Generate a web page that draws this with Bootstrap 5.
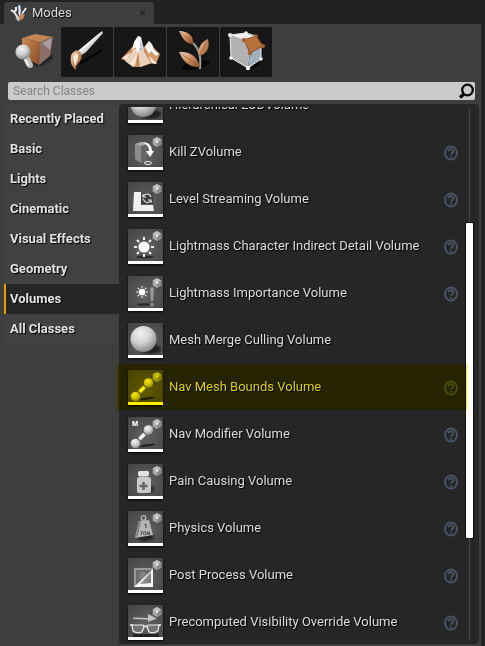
<!DOCTYPE html>
<html lang="en">
<head>
<meta charset="utf-8">
<meta name="viewport" content="width=device-width, initial-scale=1">
<title>Modes</title>
<link href="https://cdn.jsdelivr.net/npm/bootstrap@5.3.0/dist/css/bootstrap.min.css" rel="stylesheet">
<style>
body { background: #222; color: #dcdcdc; font: 13px/18px Roboto, sans-serif; text-shadow: 1px 1px 1px #000; }
svg { display: block; flex: none; }
.editor { padding: 2px 4px 0 0; }
.mode-tab { width: 150px; height: 22px; margin-left: 4px; padding: 0 8px 0 5px; background: #3e3e3e; border-radius: 3px 3px 0 0; }
.tab-close { color: #242424; font-size: 13px; line-height: 18px; text-shadow: none; background: none; }
.panel { background: #3e3e3e; padding: 3px 2px 2px 4px; }
.toolbar { gap: 1px; margin-left: 4px; }
.tool { width: 52px; height: 50px; background: #171717; border-radius: 2px; }
.tool.active { background: #3e3e3e; }
.search { height: 18px; margin: 5px 4px 4px; background: #cbcbcb; border-radius: 2px; }
.search input { font-size: 12px; line-height: 18px; height: 18px; color: #333; padding: 0 5px; }
.search input::placeholder { color: #858585; opacity: 1; }
.categories { width: 115px; }
.categories .nav-link { height: 30px; padding: 6px 0 0 6px; color: #e2e2e2; font-weight: 700; line-height: 18px; background: #414141; border-radius: 0; }
.categories .nav-link.active { background: #262626; border-left: 2px solid #e6a000; padding-left: 4px; }
.class-box { background: #262626; border-radius: 4px; padding: 3px 6px 3px 9px; }
.clip { overflow-x: visible; overflow-y: clip; }
.classes { margin-top: -25px; }
.class-row { height: 47px; padding-right: 8px; flex: none; }
.class-row > span { padding-bottom: 2px; }
.thumb { background: radial-gradient(circle at 50% 60%, #626262, #434343); border-bottom: 3px solid #fff; width: 35px; height: 35px; margin-right: 6px; box-shadow: 0 1px 2px #000; flex: none; }
.thumb text { text-shadow: none; }
.help { background: none; color: #4a5363; }
.picked::after { content: ""; position: absolute; inset: 0 -1px 1px -11px; background: #fff000; mix-blend-mode: multiply; pointer-events: none; z-index: 2; }
.scroll-col { width: 7px; padding: 2px 0 1px; }
.rail { width: 1px; background: #484848; }
.rail-above { flex: 114 0 0; }
.rail-below { flex: 102 0 0; }
.grip { flex: 315 0 0; background: #fff; border-radius: 1px; box-shadow: 0 0 0 1px #0d0d0d; }
</style>
<script src="https://cdn.jsdelivr.net/npm/bootstrap@5.3.0/dist/js/bootstrap.bundle.min.js"></script>
</head>
<body>
<svg width="0" height="0" class="position-absolute" aria-hidden="true">
  <defs>
    <radialGradient id="ball" cx=".4" cy=".3" r=".75"><stop offset="0" stop-color="#f4f4f4"/><stop offset=".5" stop-color="#cfcfcf"/><stop offset="1" stop-color="#7d7d7d"/></radialGradient>
    <linearGradient id="copper" x1="0" y1="0" x2="1" y2="1"><stop offset="0" stop-color="#c88a58"/><stop offset="1" stop-color="#8a4a20"/></linearGradient>
    <linearGradient id="leaf" x1="0" y1="0" x2="1" y2="1"><stop offset="0" stop-color="#f6d9c2"/><stop offset=".5" stop-color="#c88a5c"/><stop offset="1" stop-color="#8d5029"/></linearGradient>
    <linearGradient id="steel" x1="0" y1="0" x2="1" y2="1"><stop offset="0" stop-color="#b8b8b8"/><stop offset="1" stop-color="#6f6f6f"/></linearGradient>
    <filter id="soft" x="-30%" y="-50%" width="160%" height="200%"><feGaussianBlur stdDeviation="1"/></filter>
    <symbol id="cube" viewBox="0 0 10 10"><path d="M5 0 9.300 2.500V7.500L5 10 .7 7.500V2.500z" fill="#aaa"/><path d="M5 0 9.300 2.500 5 5 .7 2.500z" fill="#bdbdbd"/><path d="M5 5V10L9.300 7.500V2.500z" fill="#8b8b8b"/><circle cx="5" cy="4.500" r="1.500" fill="#e0e0e0"/></symbol>
    <symbol id="q" viewBox="0 0 14 16"><ellipse cx="7" cy="8" rx="6" ry="6.500" fill="none" stroke="currentColor" stroke-width="1.900"/><path d="M4.700 6.300C4.700 3.500 9.500 3.600 9.400 6.200 9.300 7.900 7.200 8 7.100 9.800M7.100 11V12.800" fill="none" stroke="currentColor" stroke-width="2"/></symbol>
    <symbol id="sun" viewBox="-10 -10 20 20"><circle r="5.600" fill="#fff"/><g stroke="#f4f4f4" stroke-width="2"><path d="M0-7V-10M0 7V10M-7 0H-10M7 0H10M-5-5-7-7M5-5 7-7M-5 5-7 7M5 5 7 7"/></g></symbol>
    <symbol id="links" viewBox="0 0 35 32"><ellipse cx="19" cy="28.500" rx="8" ry="1.300" fill="#222" transform="rotate(-8 19 28.500)"/><path d="M11.500 22 16.500 17" stroke="#fff" stroke-width="3.500"/><circle cx="7.500" cy="26.500" r="4.800" fill="url(#ball)"/><circle cx="20.500" cy="13" r="4.800" fill="url(#ball)"/></symbol>
    <symbol id="sphere" viewBox="0 0 35 32"><ellipse cx="22" cy="26" rx="11" ry="5" fill="#222" filter="url(#soft)"/><circle cx="15.500" cy="16" r="13" fill="url(#ball)"/></symbol>
  </defs>
</svg>

<div class="editor vh-100 d-flex flex-column overflow-hidden">
  <header class="mode-tab d-flex align-items-center flex-shrink-0">
    <svg width="19" height="18" viewBox="0 0 19 18" aria-hidden="true"><path d="M2 6 5 8 7 6V3M5 8 10 15" fill="none" stroke="#eee" stroke-width="2"/><path d="M9 2 11 1 12 8 10 9z" fill="#eef4ff" stroke="#86a4d2" stroke-width=".7"/><path d="M10 8 12 14" stroke="#d8e6f8" stroke-width="2"/><path d="M17 4 13 10" stroke="#f5f5f5" stroke-width="1.600"/><path d="M12 9 16 11 14 15 9 17z" fill="#c98752"/><path d="M7 13 10 17" stroke="#bcbcbc" stroke-width="2"/></svg>
    <span class="ms-1">Modes</span>
    <button type="button" class="tab-close border-0 p-0 ms-auto" aria-label="Close tab">×</button>
  </header>

  <main class="panel d-flex flex-column flex-fill overflow-hidden">
    <div class="toolbar d-flex flex-shrink-0" role="toolbar" aria-label="Modes">
      <button type="button" class="tool active border-0 p-0" aria-label="Place">
        <svg width="52" height="50" viewBox="0 0 52 50"><path d="M22 37 42 27 45 31 33 39z" fill="#1c1c1c" filter="url(#soft)"/><path d="M14 11 27 7 45 10 32 15z" fill="#c48552"/><path d="M14 11 32 15 31 38 14 29z" fill="url(#copper)"/><path d="M32 15 45 10 42 29 31 38z" fill="#8a6f68"/><path d="M34 16 44 11 42 23z" fill="#aa9aa2"/><path d="M18 30 22 38" stroke="#bbb" stroke-width="6" stroke-linecap="round"/><path d="M16 30 20 38" stroke="#e6e6e6" stroke-width="3" stroke-linecap="round"/><circle cx="15" cy="25" r="7.600" fill="url(#ball)"/></svg>
      </button>
      <button type="button" class="tool border-0 p-0" aria-label="Paint">
        <svg width="52" height="50" viewBox="0 0 52 50"><path d="M18 36 42 21 40 25 20 37z" fill="#050505"/><path d="M41 4 42 6 25 25 19 29 17 24z" fill="#d9d9d9"/><path d="M41 4 28 15 17 24 19 26z" fill="#fff"/><path d="M14 24C19 22 22 27 20 32 18 37 14 38 15 43 10 39 9 34 10 29 10 27 12 25 14 24z" fill="url(#leaf)"/><path d="M14 26C11 31 13 34 14 39 16 34 18 31 17 27z" fill="#fae7d6"/></svg>
      </button>
      <button type="button" class="tool border-0 p-0" aria-label="Landscape">
        <svg width="52" height="50" viewBox="0 0 52 50"><path d="M35 14 40 21 46 27 42 37 28 31 30 20z" fill="#d59a67"/><path d="M35 14 38 17 40 23 45 27 42 29 37 24 35 27 31 20z" fill="#f5f5f5"/><path d="M35 29 43 37 34 36z" fill="#fff0e6"/><path d="M24 9 19 19 7 32 12 34 19 40 27 40 38 36 33 26z" fill="#c88b5a"/><path d="M20 22 11 34 19 40 24 24 26 40 37 36 29 23z" fill="#ead1be"/><path d="M24 9 27 10 30 24 26 21 24 26 21 20 18 24 20 15z" fill="#fff"/><path d="M17 25 8 31 12 33zM24 25 21 39 16 37z" fill="#ffe4d4"/><path d="M26 11 30 25 26 21z" fill="#b5cbe0"/></svg>
      </button>
      <button type="button" class="tool border-0 p-0" aria-label="Foliage">
        <svg width="52" height="50" viewBox="0 0 52 50"><ellipse cx="29" cy="38" rx="14" ry="4" fill="#050505" transform="rotate(-12 29 38)"/><path d="M26 16C33 23 34 31 33 42" fill="none" stroke="#9ba1a5" stroke-width="2"/><path d="M12 4C21 4 27 9 26 17 18 17 15 10 12 4z" fill="url(#leaf)"/><path d="M41 12C43 21 40 27 32 29 30 22 34 15 41 12z" fill="url(#leaf)"/><path d="M12 25C23 24 30 29 33 40 22 41 16 34 12 25z" fill="url(#leaf)"/><path d="M13 5 26 16M40 14 33 28M13 26 32 39" stroke="#8a5434" stroke-width=".6"/></svg>
      </button>
      <button type="button" class="tool border-0 p-0" aria-label="Geometry editing">
        <svg width="52" height="50" viewBox="0 0 52 50"><path d="M28 40 41 31 45 33 33 42z" fill="#050505"/><path d="M10 8 26 6 36 10 25 14z" fill="#f0f0f0"/><path d="M10 8 25 13 30 26 28 41 11 31z" fill="#b2b2b2"/><path d="M30 25 41 19 41 32 28 41z" fill="#9fb0bd"/><path d="M10 8 11 31 28 41 41 32V20M10 8 26 6 36 9" fill="none" stroke="#eee" stroke-width="1"/><path d="M24 13 36 9 43 19 30 26z" fill="#b9713c" stroke="#8c4f25"/><g fill="#f5f5f5"><circle cx="10" cy="8" r="2"/><circle cx="26" cy="6" r="1.800"/><circle cx="11" cy="31" r="1.800"/><circle cx="28" cy="41" r="2.200"/><circle cx="41" cy="32" r="1.800"/></g><g fill="#a55f30"><circle cx="24" cy="13" r="2.200"/><circle cx="36" cy="9" r="1.800"/><circle cx="43" cy="19" r="2"/><circle cx="30" cy="26" r="2.300"/></g></svg>
      </button>
    </div>

    <div class="search d-flex align-items-center flex-shrink-0">
      <input type="text" class="flex-fill border-0 bg-transparent shadow-none" placeholder="Search Classes" aria-label="Search Classes">
      <svg width="17" height="18" viewBox="0 0 17 18" aria-hidden="true"><circle cx="9.500" cy="8" r="5.300" fill="none" stroke="#050505" stroke-width="2.300"/><path d="M6 12 2 15.500" stroke="#050505" stroke-width="3.500"/></svg>
    </div>

    <div class="d-flex flex-fill overflow-hidden">
      <nav class="categories nav flex-column flex-nowrap flex-shrink-0" aria-label="Categories">
        <a class="nav-link" href="#">Recently Placed</a>
        <a class="nav-link" href="#">Basic</a>
        <a class="nav-link" href="#">Lights</a>
        <a class="nav-link" href="#">Cinematic</a>
        <a class="nav-link" href="#">Visual Effects</a>
        <a class="nav-link" href="#">Geometry</a>
        <a class="nav-link active" aria-current="page" href="#">Volumes</a>
        <a class="nav-link" href="#">All Classes</a>
      </nav>

      <section class="class-box d-flex flex-fill" aria-label="Volumes">
        <div class="clip flex-fill">
          <ul class="classes list-unstyled d-flex flex-column mb-0">
            <li class="class-row d-flex align-items-center"><div class="thumb"><svg width="35" height="32"><use href="#sphere"/></svg></div><span>Hierarchical LODVolume</span></li>
            <li class="class-row d-flex align-items-center"><div class="thumb"><svg width="35" height="32" viewBox="0 0 35 32"><path d="M7 9 13 7 19 9 18 26 13 28 7 24z" fill="#8b8b8b"/><path d="M13 10 19 9 18 26 13 28z" fill="#666"/><path d="M7 9 13 7 19 9 13 11z" fill="#aaa"/><path d="M14 7C21 7 24 11 24 16H26L22 22 18 16H21C21 11 18 9 14 7z" fill="#fff"/><ellipse cx="20" cy="28" rx="3.500" ry="1.500" fill="none" stroke="#eee"/><use href="#cube" x="24" y="2" width="10" height="10"/></svg></div><span>Kill ZVolume</span><button type="button" class="help border-0 p-0 ms-auto" aria-label="Help: Kill ZVolume"><svg width="14" height="16"><use href="#q"/></svg></button></li>
            <li class="class-row d-flex align-items-center"><div class="thumb"><svg width="35" height="32" viewBox="0 0 35 32"><path d="M6 10H13V23H25L26 29H5z" fill="#f2f2f2"/><path d="M13 11H25V22H13z" fill="#404040"/><path d="M15 15C17 11 22 11 23 15M23 18C21 22 17 21 15 17M15 12V15H18M23 21V18H20" fill="none" stroke="#ddd" stroke-width="1.200"/><use href="#cube" x="24" y="2" width="10" height="10"/></svg></div><span>Level Streaming Volume</span><button type="button" class="help border-0 p-0 ms-auto" aria-label="Help: Level Streaming Volume"><svg width="14" height="16"><use href="#q"/></svg></button></li>
            <li class="class-row d-flex align-items-center"><div class="thumb"><svg width="35" height="32" viewBox="0 0 35 32"><ellipse cx="17" cy="28" rx="9" ry="1.500" fill="#292929"/><use href="#sun" x="6" y="8" width="20" height="20"/><use href="#cube" x="24" y="2" width="10" height="10"/></svg></div><span>Lightmass Character Indirect Detail Volume</span><button type="button" class="help border-0 p-0 ms-auto" aria-label="Help: Lightmass Character Indirect Detail Volume"><svg width="14" height="16"><use href="#q"/></svg></button></li>
            <li class="class-row d-flex align-items-center"><div class="thumb"><svg width="35" height="32" viewBox="0 0 35 32"><ellipse cx="16" cy="28.500" rx="7" ry="1.300" fill="#292929"/><use href="#sun" x="8" y="10" width="12" height="12"/><path d="M22 13Q24 9 26 13L25 25H23z" fill="#999"/><circle cx="24" cy="28.500" r="2" fill="#888"/><use href="#cube" x="24" y="2" width="10" height="10"/></svg></div><span>Lightmass Importance Volume</span><button type="button" class="help border-0 p-0 ms-auto" aria-label="Help: Lightmass Importance Volume"><svg width="14" height="16"><use href="#q"/></svg></button></li>
            <li class="class-row d-flex align-items-center"><div class="thumb"><svg width="35" height="32"><use href="#sphere"/></svg></div><span>Mesh Merge Culling Volume</span></li>
            <li class="class-row picked position-relative d-flex align-items-center" aria-current="true"><div class="thumb"><svg width="35" height="32" viewBox="0 0 35 32"><use href="#links" width="35" height="32"/><use href="#cube" x="24" y="2" width="10" height="10"/></svg></div><span>Nav Mesh Bounds Volume</span><button type="button" class="help border-0 p-0 ms-auto" aria-label="Help: Nav Mesh Bounds Volume"><svg width="14" height="16"><use href="#q"/></svg></button></li>
            <li class="class-row d-flex align-items-center"><div class="thumb"><svg width="35" height="32" viewBox="0 0 35 32"><text x="4" y="9" font-size="7" font-weight="900" fill="#fff">M</text><use href="#links" width="35" height="32"/><use href="#cube" x="24" y="2" width="10" height="10"/></svg></div><span>Nav Modifier Volume</span><button type="button" class="help border-0 p-0 ms-auto" aria-label="Help: Nav Modifier Volume"><svg width="14" height="16"><use href="#q"/></svg></button></li>
            <li class="class-row d-flex align-items-center"><div class="thumb"><svg width="35" height="32" viewBox="0 0 35 32"><ellipse cx="20" cy="25" rx="6" ry="4" fill="#252525" filter="url(#soft)"/><rect x="9" y="13" width="14" height="16" rx="2.500" fill="#c9c9c9"/><rect x="10" y="7" width="11" height="5" rx="1.500" fill="#e4e4e4"/><path d="M11 12.500H20" stroke="#999"/><path d="M15.500 18V26M11.500 22H19.500" stroke="#666" stroke-width="2.500"/><use href="#cube" x="24" y="2" width="10" height="10"/></svg></div><span>Pain Causing Volume</span><button type="button" class="help border-0 p-0 ms-auto" aria-label="Help: Pain Causing Volume"><svg width="14" height="16"><use href="#q"/></svg></button></li>
            <li class="class-row d-flex align-items-center"><div class="thumb"><svg width="35" height="32" viewBox="0 0 35 32" text-rendering="geometricPrecision"><path d="M7 26 24 23 26 28 15 31z" fill="#222" filter="url(#soft)"/><circle cx="15.500" cy="7" r="2.300" fill="none" stroke="#bbb" stroke-width="1.200"/><path d="M11 10 21 9 25 24 7 27z" fill="#b5b5b5"/><path d="M11 10 7 27 10 24 13 11z" fill="#878787"/><g font-weight="700" fill="#333"><text x="16" y="17" font-size="6">1</text><text x="12" y="24" font-size="5">TON</text></g><use href="#cube" x="24" y="2" width="10" height="10"/></svg></div><span>Physics Volume</span><button type="button" class="help border-0 p-0 ms-auto" aria-label="Help: Physics Volume"><svg width="14" height="16"><use href="#q"/></svg></button></li>
            <li class="class-row d-flex align-items-center"><div class="thumb"><svg width="35" height="32" viewBox="0 0 35 32"><path d="M6 10H25V29H6z" fill="#999"/><path d="M8 12H23V27H8z" fill="#6c6c6c"/><circle cx="15" cy="18" r="4" fill="#828282"/><path d="M25 11V29H6z" fill="#f4f4f4"/><path d="M23 14V25L12 26z" fill="url(#steel)"/><use href="#cube" x="24" y="2" width="10" height="10"/></svg></div><span>Post Process Volume</span><button type="button" class="help border-0 p-0 ms-auto" aria-label="Help: Post Process Volume"><svg width="14" height="16"><use href="#q"/></svg></button></li>
            <li class="class-row d-flex align-items-center"><div class="thumb"><svg width="35" height="32" viewBox="0 0 35 32"><use href="#cube" x="24" y="2" width="10" height="10"/><path d="M5 12.500 20 13V9L29 13.500 20 17V14.500L5 14z" fill="#c4c4c4"/><path d="M5 29H31V32H5z" fill="#222"/><path d="M4 20H15L16 22 14 27Q9 29 5 26zM20 20H31L30 26Q25 29 21 27L19 22z" fill="#888" fill-opacity=".6" stroke="#ededed" stroke-width="1.200"/><path d="M16 22Q17.500 20 19 22M2 20H5M30 20H33" fill="none" stroke="#ededed" stroke-width="1.500"/></svg></div><span>Precomputed Visibility Override Volume</span><button type="button" class="help border-0 p-0 ms-auto" aria-label="Help: Precomputed Visibility Override Volume"><svg width="14" height="16"><use href="#q"/></svg></button></li>
          </ul>
        </div>
        <div class="scroll-col d-flex flex-column align-items-center flex-shrink-0" aria-hidden="true">
          <div class="rail rail-above"></div>
          <div class="grip w-100"></div>
          <div class="rail rail-below"></div>
        </div>
      </section>
    </div>
  </main>
</div>
</body>
</html>
